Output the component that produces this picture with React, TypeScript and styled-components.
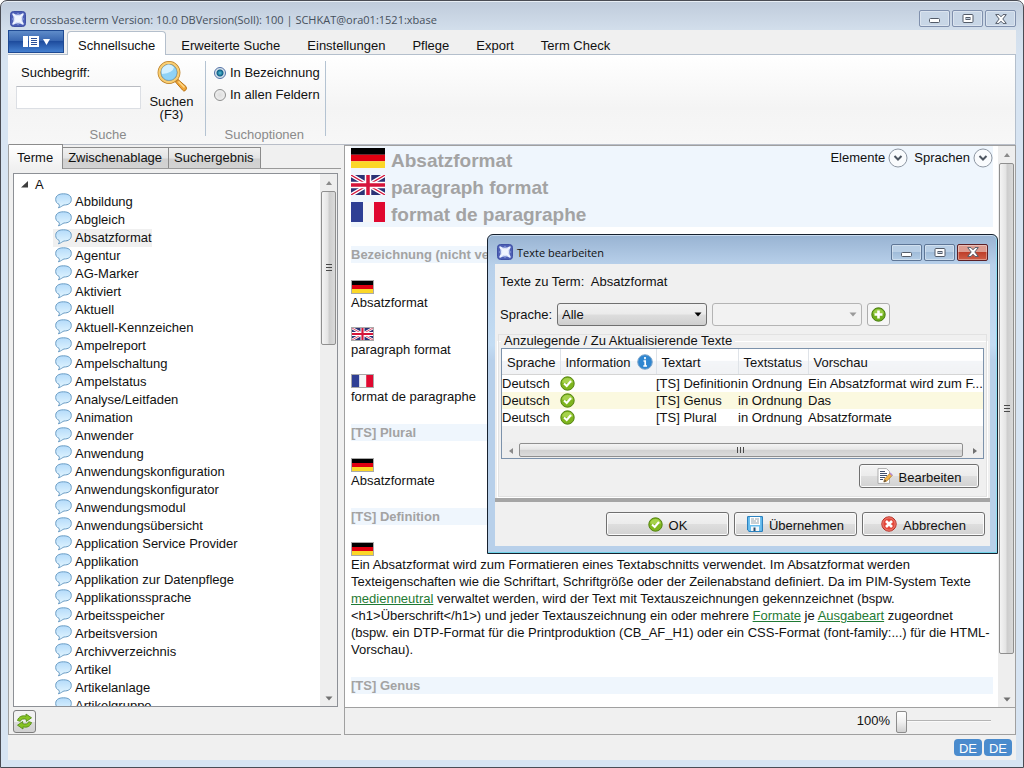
import React from 'react';
import styled, { createGlobalStyle, css } from 'styled-components';

const GlobalStyle = createGlobalStyle`
  *, *::before, *::after { box-sizing: border-box; }
  body {
    margin: 0;
    background: #fff;
    color: #111;
    font: 13px/18px "Liberation Sans", Arial, sans-serif;
  }
  button, input, select { font: inherit; color: inherit; margin: 0; }
  ul { list-style: none; margin: 0; padding: 0; }
  h1, h2, p { margin: 0; }
  svg { display: block; flex: none; }
`;

/* ---------- window frames ---------- */

const Shell = styled.div`
  position: relative;
  display: flex;
  flex-direction: column;
  height: 100vh;
  padding: 0 7px 7px;
  border: 1px solid #4a4c54;
  border-radius: 7px 7px 0 0;
  background: linear-gradient(#bfcbdb 0, #d3dfec 30px, #d7e4f2 60px);
  box-shadow: inset 0 1px 0 #e8eef5;
`;

const TitleBar = styled.header<{ $dialog?: boolean }>`
  display: flex;
  flex: none;
  align-items: center;
  gap: 4px;
  height: 29px;
  padding: ${p => (p.$dialog ? '5px 2px 0 2px' : '6px 0 0 2px')};
`;

const TitleText = styled.h1<{ $active?: boolean }>`
  flex: 1;
  padding-top: 2px;
  font: 11px/18px "Open Sans", "Segoe UI", sans-serif;
  color: ${p => (p.$active ? '#111' : '#46505c')};
  white-space: nowrap;
`;

const WindowButtons = styled.div`
  display: flex;
  gap: 2px;
`;

const WindowButton = styled.button<{ $tone: 'pale' | 'blue' | 'red' }>`
  display: grid;
  place-items: center;
  width: 31px;
  height: 17px;
  padding: 0;
  border: 1px solid #8090ad;
  border-radius: 2px;
  box-shadow: inset 0 0 0 1px rgba(255, 255, 255, 0.35);
  background: #c8d6e6;
  ${p => p.$tone === 'blue' && css`
    border-color: #5e7696;
    background: linear-gradient(#b9cfe6 50%, #a0bcd9 50%, #b4cde6);
  `}
  ${p => p.$tone === 'red' && css`
    border-color: #5c2026;
    background: linear-gradient(#dd9c90 45%, #bf3f2a 50%, #cf5f48);
  `}
`;

const Client = styled.div`
  display: flex;
  flex: 1;
  flex-direction: column;
  min-height: 0;
  background: #f0f0f0;
`;

/* ---------- ribbon ---------- */

const RibbonTabs = styled.nav`
  display: flex;
  flex: none;
  align-items: flex-end;
  height: 25px;
  border-bottom: 1px solid #b4bfcc;
`;

const AppMenuButton = styled.button`
  display: flex;
  align-items: center;
  align-self: flex-start;
  justify-content: center;
  gap: 5px;
  width: 56px;
  height: 23px;
  margin-right: 3px;
  padding: 0;
  border: 1px solid #1f4a93;
  background: linear-gradient(#5f8cc9 0, #3a68b2 45%, #1e4c9e 50%, #4580cf 100%);
`;

const RibbonTab = styled.button<{ $active?: boolean }>`
  height: ${p => (p.$active ? 24 : 23)}px;
  margin-bottom: -1px;
  padding: ${p => (p.$active ? '4px 10px 0' : '5px 0 0')};
  margin-left: ${p => (p.$active ? 0 : 15)}px;
  margin-right: ${p => (p.$active ? 0 : 12)}px;
  border: ${p => (p.$active ? '1px solid #b4bfcc' : 'none')};
  border-bottom: none;
  border-radius: 4px 4px 0 0;
  background: ${p => (p.$active ? '#fff' : 'none')};
  line-height: 18px;
`;

const Ribbon = styled.div`
  display: flex;
  flex: none;
  height: 90px;
  padding: 6px 0 5px 5px;
  border-right: 1px solid #b4bfcc;
  border-bottom: 1px solid #b9bec8;
  background: linear-gradient(#fff 0, #f4f4f4 60%, #f7f7f7 100%);
`;

const RibbonGroup = styled.section`
  display: flex;
  flex-direction: column;
  justify-content: space-between;
  border-right: 1px solid #b4c3d2;
  margin-bottom: 3px;
  padding: 0 5px 0 3px;
`;

const GroupCaption = styled.div`
  color: #8a8a8a;
  text-align: center;
  line-height: 16px;
  margin-bottom: -7px;
`;

const GroupBody = styled.div`
  display: flex;
  gap: 2px;
`;

const SearchField = styled.label`
  display: flex;
  flex-direction: column;
  gap: 4px;
  width: 125px;
  padding-top: 3px;

  span { padding-left: 5px; }
  input {
    width: 100%;
    height: 23px;
    border: 1px solid #dcdfe4;
    border-top-color: #b9bcc2;
    background: #fff;
  }
`;

const SearchButton = styled.button`
  display: flex;
  flex-direction: column;
  align-items: center;
  width: 57px;
  padding: 0;
  border: none;
  background: none;
  line-height: 13px;

  svg { margin-bottom: 2px; }
`;

const RadioList = styled.div`
  display: flex;
  flex-direction: column;
  gap: 4px;
  padding: 3px 0 0 5px;
`;

const RadioLabel = styled.label`
  display: flex;
  align-items: center;
  gap: 4px;

  input {
    appearance: none;
    width: 12px;
    height: 12px;
    border: 1px solid #8e8f8f;
    border-radius: 50%;
    background: radial-gradient(#ddd, #f4f4f4);
  }
  input:checked {
    border-color: #4f6fa5;
    background: radial-gradient(#57c5d8 0, #0f5f86 3px, #d4dfea 4px, #f4f4f4);
  }
`;

/* ---------- workspace ---------- */

const Workspace = styled.main`
  display: flex;
  flex: 1;
  gap: 3px;
  min-height: 0;
`;

const Sidebar = styled.aside`
  display: flex;
  flex: none;
  flex-direction: column;
  width: 333px;
  border: 1px solid #a0a0a0;
  border-width: 0 0 1px 1px;
`;

const PanelTabs = styled.div`
  display: flex;
  flex: none;
  align-items: flex-end;
  height: 24px;
  border-bottom: 1px solid #9a9a9a;
`;

const PanelTab = styled.button<{ $active?: boolean }>`
  height: ${p => (p.$active ? 25 : 21)}px;
  margin-bottom: ${p => (p.$active ? -1 : 0)}px;
  padding: ${p => (p.$active ? '2px 9px 0 8px' : '0 6px 0 5px')};
  border: 1px solid #8b8b8b;
  border-width: 1px 1px 0 0;
  background: ${p => (p.$active ? 'linear-gradient(#fff, #f0f0f0)' : 'linear-gradient(#f0f0f0 0, #e4e4e4 50%, #d0d0d0 55%, #d3d3d3 100%)')};
  line-height: 18px;
`;

const TreeBox = styled.div`
  display: flex;
  flex: 1;
  min-height: 0;
  margin: 4px 3px 0 4px;
  border: 1px solid #8d9096;
  background: #fff;
`;

const Tree = styled.ul`
  flex: 1;
  overflow: hidden;
  padding: 1px 0 0 6px;
`;

const TreeRoot = styled.div`
  display: flex;
  align-items: center;
  gap: 6px;
  height: 18px;

  span { padding-top: 1px; }
`;

const TreeItem = styled.li<{ $selected?: boolean }>`
  display: flex;
  width: max-content;
  height: 18px;
  margin-left: 33px;
  padding-left: 2px;
  gap: 3px;
  background: ${p => (p.$selected ? '#f0f0f0' : 'none')};
`;

const SidebarFooter = styled.div`
  flex: none;
  height: 27px;
  padding: 3px 4px;
`;

const IconButton = styled.button<{ $light?: boolean }>`
  display: grid;
  place-items: center;
  width: 23px;
  height: 23px;
  padding: 0;
  border: 1px solid ${p => (p.$light ? '#adadad' : '#7d7d7d')};
  border-radius: 3px;
  background: ${p => (p.$light ? '#f6f6f6' : 'linear-gradient(#f2f2f2 50%, #dcdcdc 50%, #d0d0d0)')};
`;

/* ---------- scroll bars ---------- */

const ScrollTrack = styled.div<{ $horizontal?: boolean }>`
  display: flex;
  flex: none;
  flex-direction: ${p => (p.$horizontal ? 'row' : 'column')};
  background: #eeeeee;
  ${p => (p.$horizontal ? 'height: 16px;' : 'width: 17px;')}
`;

const ScrollArrow = styled.div`
  display: grid;
  place-items: center;
  flex: none;
  width: 17px;
  height: 17px;
`;

const ScrollThumb = styled.div<{ $horizontal?: boolean; $share: number }>`
  display: grid;
  place-items: center;
  flex: ${p => p.$share} 0 0;
  border: 1px solid #8f8f8f;
  border-radius: 2px;
  margin: ${p => (p.$horizontal ? '1px 0' : '0 1px')};
  background: ${p => (p.$horizontal
    ? 'linear-gradient(#f4f4f4 0, #e6e6e6 45%, #d0d0d0 50%, #dcdcdc 100%)'
    : 'linear-gradient(90deg, #f4f4f4 0, #e4e4e4 45%, #cdcdcd 55%, #dadada 100%)')};
`;

const ScrollRest = styled.div<{ $share: number }>`
  flex: ${p => p.$share} 0 0;
`;

/* ---------- viewer ---------- */

const Viewer = styled.section`
  display: flex;
  flex: 1;
  flex-direction: column;
  min-width: 0;
  border: 1px solid #a0a0a0;
`;

const ViewerScroll = styled.div`
  display: flex;
  flex: 1;
  min-height: 0;
  border-bottom: 1px solid #a0a0a0;
  background: #fff;
`;

const Article = styled.article`
  flex: 1;
  overflow: hidden;
  padding: 0 5px 0 6px;
`;

const Hero = styled.div`
  display: flex;
  justify-content: space-between;
  height: 81px;
  background: #eff6fd;
`;

const HeroTitle = styled.h2`
  display: flex;
  gap: 6px;
  height: 27px;
  padding-top: 2px;
  color: #a3a3a3;
  font-size: 19px;
  font-weight: bold;
  line-height: 26px;
`;

const Filters = styled.div`
  display: flex;
  gap: 6px;
  height: 24px;
`;

const FilterButton = styled.button`
  display: flex;
  align-items: center;
  gap: 3px;
  padding: 0;
  border: none;
  background: none;
`;

const SectionTitle = styled.h2`
  height: 17px;
  margin: 19px 0 17px;
  background: #eff6fd;
  color: #a3a3a3;
  font-size: 13px;
  font-weight: bold;
  line-height: 17px;
`;

const Entry = styled.div`
  display: flex;
  flex-direction: column;
  margin-bottom: 16px;
  line-height: 17px;

  a { color: #1f7a34; }
`;

const ZoomBar = styled.label`
  display: flex;
  flex: none;
  align-items: center;
  justify-content: flex-end;
  gap: 6px;
  height: 26px;
  padding-right: 24px;
`;

const ZoomRange = styled.input`
  appearance: none;
  width: 95px;
  height: 22px;
  background: none;

  &::-webkit-slider-runnable-track {
    height: 2px;
    border-top: 1px solid #b4b4b4;
    border-bottom: 1px solid #fafafa;
  }
  &::-webkit-slider-thumb {
    appearance: none;
    width: 11px;
    height: 22px;
    margin-top: -10px;
    border: 1px solid #8c8c8c;
    border-radius: 2px;
    background: linear-gradient(#fff 0, #f0f0f0 50%, #d0d0d0 100%);
  }
`;

const StatusBar = styled.footer`
  display: flex;
  flex: none;
  align-items: flex-start;
  justify-content: flex-end;
  gap: 2px;
  height: 25px;
  padding: 4px 4px 0;
`;

const Badge = styled.span`
  width: 28px;
  height: 17px;
  border-radius: 4px;
  background: #4a8bcd;
  color: #fff;
  text-align: center;
  line-height: 19px;
`;

/* ---------- dialog ---------- */

const Dialog = styled.div`
  position: absolute;
  top: 233px;
  right: 25px;
  display: flex;
  flex-direction: column;
  width: 511px;
  padding: 0 7px 7px;
  border: 1px solid #16202e;
  border-radius: 6px 6px 0 0;
  background: linear-gradient(#98b3d2 0, #b8d0ea 30px, #c3dcf3 110px, #b8d0ea 125px);
  box-shadow: inset 0 1px 0 #c9dbee, inset 0 -1px 0 #6fd3e8, inset -1px 0 0 #8fdcef;
`;

const DialogBody = styled.div`
  display: flex;
  flex-direction: column;
  height: 282px;
  background: #f0f0f0;
`;

const TermLine = styled.p`
  padding: 9px 5px 0;
  white-space: pre;
`;

const FormRow = styled.div`
  display: flex;
  align-items: center;
  gap: 5px;
  padding: 12px 5px 0;
`;

const SelectBox = styled.label<{ $disabled?: boolean }>`
  position: relative;
  display: flex;
  align-items: center;
  gap: 5px;
  color: #111;

  select {
    appearance: none;
    width: 150px;
    height: 23px;
    padding: 0 4px;
    border: 1px solid ${p => (p.$disabled ? '#b4b4b4' : '#707070')};
    border-radius: 3px;
    background: ${p => (p.$disabled ? '#f2f2f2' : 'linear-gradient(#f2f2f2 0, #ebebeb 48%, #dddddd 52%, #cfcfcf 100%)')};
    opacity: 1;
  }
  svg { position: absolute; right: 5px; top: 7px; }
`;

const TextGroup = styled.fieldset`
  display: flex;
  flex: 1;
  flex-direction: column;
  align-items: flex-end;
  gap: 5px;
  min-width: 0;
  margin: 7px 2px 0;
  padding: 0 3px 7px 3px;
  border: 1px solid #fff;
  outline: 1px solid #e2e2e2;
  outline-offset: -2px;

  legend {
    padding: 0 3px;
    line-height: 16px;
    background: #f0f0f0;
  }
`;

const TableFrame = styled.div`
  display: flex;
  flex-direction: column;
  justify-content: space-between;
  width: 100%;
  height: 111px;
  margin-top: -1px;
  border: 1px solid #7c92ab;
`;

const Table = styled.table`
  width: 100%;
  table-layout: fixed;
  border-collapse: collapse;
  line-height: 17px;

  th {
    height: 25px;
    padding: 2px 0 0 5px;
    border-right: 1px solid #dfe3e8;
    border-bottom: 1px solid #d5d5d5;
    background: linear-gradient(#fff 45%, #f3f5f8 50%, #f1f2f4 100%);
    font-weight: normal;
    text-align: left;
    white-space: nowrap;
  }
  th:last-child { border-right: none; }
  td {
    height: 17px;
    padding: 0;
    white-space: nowrap;
  }
  tbody tr { background: #fff; }
  tbody tr:nth-child(2) { background: #fbf9e0; }
`;

const InfoHead = styled.span`
  display: flex;
  gap: 6px;
`;

const Separator = styled.hr`
  flex: none;
  width: 100%;
  height: 4px;
  margin: 0;
  border: none;
  background: #a5a5a5;
`;

const ButtonRow = styled.div`
  display: flex;
  flex: none;
  justify-content: flex-end;
  gap: 5px;
  padding: 10px 5px 10px;
`;

const PushButton = styled.button`
  display: flex;
  align-items: center;
  justify-content: center;
  gap: 6px;
  width: 123px;
  height: 24px;
  padding: 0;
  border: 1px solid #707070;
  border-radius: 3px;
  background: linear-gradient(#f3f3f3 0, #ececec 48%, #dedede 52%, #d2d2d2 100%);
  box-shadow: inset 0 0 0 1px #fbfbfb;

  span { padding-top: 3px; }
`;

const EditButton = styled(PushButton)`
  width: 120px;
  margin-right: 5px;
`;

/* ---------- icons ---------- */

const LogoIcon = () => (
  <svg width="16" height="16" viewBox="0 0 16 16">
    <rect x=".5" y=".5" width="15" height="15" rx="3" fill="#4d5fb5" stroke="#3f50a4" />
    <path d="M2 2Q8 5 14 2Q11 8 14 14Q8 11 2 14Q5 8 2 2z" fill="#b9c6ee" />
    <path d="M3 3L13 13M13 3L3 13" stroke="#eef3ff" strokeWidth="2" />
    <circle cx="8" cy="8" r="3.800" fill="#f2f6ff" opacity=".9" />
    <g fill="#8d9edb">
      <circle cx="8" cy="2.500" r=".7" /><circle cx="8" cy="13.500" r=".7" />
      <circle cx="2.500" cy="8" r=".7" /><circle cx="13.500" cy="8" r=".7" />
    </g>
  </svg>
);

const MinimizeIcon = () => (
  <svg width="12" height="9" viewBox="0 0 12 9"><rect x=".5" y="4.500" width="10" height="4" rx="1" fill="#fff" stroke="#535b68" /></svg>
);
const RestoreIcon = () => (
  <svg width="12" height="9" viewBox="0 0 12 9">
    <rect x="1" y=".5" width="10" height="8" rx="1" fill="#fff" stroke="#535b68" />
    <rect x="4" y="3.500" width="4" height="2" fill="#c0cddd" stroke="#535b68" />
  </svg>
);
const CloseIcon = () => (
  <svg width="12" height="10" viewBox="0 0 12 10">
    <path d="M.7.6H4L6 2.800L8 .6H11.300L7.800 5L11.300 9.400H8L6 7.200L4 9.400H.7L4.200 5z" fill="#fff" stroke="#535b68" strokeLinejoin="round" />
  </svg>
);

const MenuIcon = () => (
  <svg width="27" height="13" viewBox="0 0 27 13">
    <path d="M0 1H5V12H0z" fill="#fff" />
    <path d="M6 1H16V12H6z" fill="#fff" />
    <path d="M8 3.500H14M8 5.500H14M8 7.500H14M8 9.500H14" stroke="#2a5099" />
    <path d="M20 4H27L23.500 10z" fill="#fff" />
  </svg>
);

const MagnifierIcon = () => (
  <svg width="32" height="32" viewBox="0 0 32 32">
    <path d="M19.500 21L22 18.500L30 25.500Q31.500 28 29 29.800Q27.500 30.500 26.500 29z" fill="#f0a638" stroke="#b97416" />
    <path d="M22.500 20.500L28.500 26.500" stroke="#ffd98a" strokeWidth="1.500" />
    <circle cx="13" cy="11.500" r="9.600" fill="#a5dcf8" stroke="#b97a1c" strokeWidth="3.600" />
    <circle cx="13" cy="11.500" r="9.600" fill="none" stroke="#f8ce74" strokeWidth="2.200" />
    <circle cx="13" cy="11.500" r="8" fill="#8fd2f6" stroke="#6c9fbe" strokeWidth=".7" />
    <path d="M6 13A7 7 0 0 1 18 6.300Q17 12 6 13z" fill="#d3f0ff" />
  </svg>
);

const BubbleIcon = () => (
  <svg width="17" height="16" viewBox="0 0 17 16">
    <defs>
      <linearGradient id="bubble" x1="0" y1="0" x2="0" y2="1">
        <stop offset="0" stopColor="#b4dbfa" />
        <stop offset="1" stopColor="#e4f6ff" />
      </linearGradient>
    </defs>
    <path d="M8.500 .8C13.500 .8 16.300 2.800 16.300 6.400C16.300 10.200 13.500 12 9 12C7.500 12.400 6.400 14 3.300 14.800C4.500 13.600 4.600 12.500 4 11.300C1.800 10.400 .7 8.800 .7 6.400C.7 2.800 3.500 .8 8.500 .8z" fill="url(#bubble)" stroke="#6c9dc4" />
  </svg>
);

const GermanFlag = ({ w, h }: { w: number; h: number }) => (
  <svg width={w} height={h} viewBox="0 0 34 21" preserveAspectRatio="none">
    <path d="M0 0H34V7H0z" fill="#000" /><path d="M0 7H34V14H0z" fill="#e00010" /><path d="M0 14H34V21H0z" fill="#fbd728" />
  </svg>
);
const BritishFlag = ({ w, h }: { w: number; h: number }) => (
  <svg width={w} height={h} viewBox="0 0 34 20" preserveAspectRatio="none">
    <path d="M0 0H34V20H0z" fill="#2b3276" />
    <path d="M0 0L34 20M34 0L0 20" stroke="#fff" strokeWidth="4" />
    <path d="M0 0L34 20M34 0L0 20" stroke="#d5143a" strokeWidth="1.200" />
    <path d="M17 0V20M0 10H34" stroke="#fff" strokeWidth="6.500" />
    <path d="M17 0V20M0 10H34" stroke="#d5143a" strokeWidth="3.500" />
  </svg>
);
const FrenchFlag = ({ w, h }: { w: number; h: number }) => (
  <svg width={w} height={h} viewBox="0 0 34 20" preserveAspectRatio="none">
    <path d="M0 0H12V20H0z" fill="#2f3f94" /><path d="M12 0H23V20H12z" fill="#f6f6f6" /><path d="M23 0H34V20H23z" fill="#e0082f" />
  </svg>
);

const SmallFlagFrame = styled.span`
  display: block;
  width: 23px;
  height: 14px;
  border: 1px solid #a9a9a9;
`;

const RoundChevron = () => (
  <svg width="20" height="20" viewBox="0 0 20 20">
    <circle cx="10" cy="10" r="9" fill="#f9fbfd" stroke="#8e97a3" />
    <path d="M6.500 8L10 11.500L13.500 8" fill="none" stroke="#4d5560" strokeWidth="2" />
  </svg>
);

const CheckIcon = () => (
  <svg width="15" height="15" viewBox="0 0 15 15">
    <circle cx="7.500" cy="7.500" r="6.700" fill="#7fb51f" stroke="#538310" />
    <path d="M2 6.500A5.600 5.600 0 0 1 13 6.500Q7.500 8 2 6.500z" fill="#a6d24c" />
    <path d="M4 7.500L6.700 10L11 5" fill="none" stroke="#fff" strokeWidth="2.100" />
  </svg>
);
const PlusIcon = () => (
  <svg width="15" height="15" viewBox="0 0 15 15">
    <circle cx="7.500" cy="7.500" r="6.700" fill="#6fae1c" stroke="#477a10" />
    <path d="M2 6.500A5.600 5.600 0 0 1 13 6.500Q7.500 8 2 6.500z" fill="#98cb45" />
    <path d="M7.500 3.500V11.500M3.500 7.500H11.500" stroke="#fff" strokeWidth="2.600" />
  </svg>
);
const CancelIcon = () => (
  <svg width="16" height="16" viewBox="0 0 16 16">
    <circle cx="8" cy="8" r="7.200" fill="#e2473a" stroke="#b42e24" />
    <circle cx="8" cy="8" r="6.200" fill="none" stroke="#f09086" strokeWidth=".8" />
    <path d="M5 5L11 11M11 5L5 11" stroke="#fff" strokeWidth="2.600" />
  </svg>
);
const InfoIcon = () => (
  <svg width="16" height="16" viewBox="0 0 16 16">
    <circle cx="8" cy="8" r="7.300" fill="#2f86d0" stroke="#84a9cc" />
    <path d="M8 3V5.200M6.500 7H8.200V12M6.300 12H10" stroke="#fff" strokeWidth="1.700" fill="none" />
  </svg>
);
const SaveIcon = () => (
  <svg width="16" height="16" viewBox="0 0 16 16">
    <path d="M.6.6H15.400V15.400H2L.6 14z" fill="#6cc0f0" stroke="#1e78ba" />
    <path d="M3 1H13V9H3z" fill="#fff" />
    <path d="M4 3H7M8 3H12M4 5H9M10 5H12M4 7H12" stroke="#7a8a98" strokeWidth=".8" />
    <path d="M4 10.500H12V15H4z" fill="#f2f6fa" /><path d="M6.500 11.500H8.500V15H6.500z" fill="#2e4d68" />
  </svg>
);
const EditIcon = () => (
  <svg width="16" height="16" viewBox="0 0 16 16">
    <path d="M1 .6H9.500L12.500 3.600V15.400H1z" fill="#fff" stroke="#9a9a9a" strokeWidth=".8" />
    <path d="M3 3.500H8M3 5.500H10M3 7.500H10M3 9.500H8M3 11.500H6" stroke="#41506b" />
    <path d="M7.500 11L13 5.300L15.200 7.500L9.600 13.200L6.800 14z" fill="#f3b548" stroke="#a56d1d" strokeWidth=".7" />
    <path d="M12.500 5.600L13.500 4.600L15.700 6.800L14.700 7.900z" fill="#b48ad0" />
    <path d="M6.800 14L8 11.500L9.200 12.900z" fill="#444" />
  </svg>
);
const RefreshIcon = () => (
  <svg width="17" height="17" viewBox="0 0 17 17">
    <path d="M1.500 7.500C2.500 3.500 6.500 2 10 3.200V1L15.500 4.800L10.300 8.500V6.300C7.500 5.500 5 6 4.300 8.300z" fill="#86c423" stroke="#568c16" strokeWidth=".9" strokeLinejoin="round" />
    <path d="M15.500 9.500C14.500 13.500 10.500 15 7 13.800V16L1.500 12.200L6.700 8.500V10.700C9.500 11.500 12 11 12.700 8.700z" fill="#86c423" stroke="#568c16" strokeWidth=".9" strokeLinejoin="round" />
  </svg>
);
const ExpandedIcon = () => (
  <svg width="9" height="9" viewBox="0 0 9 9"><path d="M8 1V7.500H1z" fill="#3d3d3d" /></svg>
);
const Triangle = ({ dir, color = '#707070' }: { dir: 'up' | 'down' | 'left' | 'right'; color?: string }) => {
  const d = { up: 'M1 6L4 2L7 6z', down: 'M.5 2.500H7.500L4 6.500z', left: 'M6 1L2 4L6 7z', right: 'M2 1L6 4L2 7z' }[dir];
  return <svg width="8" height="8" viewBox="0 0 8 8"><path d={d} fill={color} /></svg>;
};
const Grip = ({ horizontal }: { horizontal?: boolean }) => (
  <svg width="8" height="8" viewBox="0 0 8 8">
    <path d={horizontal ? 'M.5 1V7M3.500 1V7M6.500 1V7' : 'M1 .5H7M1 3.500H7M1 6.500H7'} stroke="#4a4a4a" />
  </svg>
);

/* ---------- composed parts ---------- */

const ScrollBar = ({ thumb, rest, horizontal }: { thumb: number; rest: number; horizontal?: boolean }) => (
  <ScrollTrack $horizontal={horizontal} aria-hidden="true">
    <ScrollArrow><Triangle dir={horizontal ? 'left' : 'up'} color="#8a8a8a" /></ScrollArrow>
    <ScrollThumb $horizontal={horizontal} $share={thumb}><Grip horizontal={horizontal} /></ScrollThumb>
    <ScrollRest $share={rest} />
    <ScrollArrow><Triangle dir={horizontal ? 'right' : 'down'} /></ScrollArrow>
  </ScrollTrack>
);

const Controls = ({ active }: { active?: boolean }) => (
  <WindowButtons>
    <WindowButton $tone={active ? 'blue' : 'pale'} aria-label="Minimieren"><MinimizeIcon /></WindowButton>
    <WindowButton $tone={active ? 'blue' : 'pale'} aria-label="Maximieren"><RestoreIcon /></WindowButton>
    <WindowButton $tone={active ? 'red' : 'pale'} aria-label="Schließen"><CloseIcon /></WindowButton>
  </WindowButtons>
);

const flags = { de: GermanFlag, en: BritishFlag, fr: FrenchFlag };

const SmallFlag = ({ lang }: { lang: keyof typeof flags }) => {
  const Flag = flags[lang];
  return <SmallFlagFrame><Flag w={21} h={12} /></SmallFlagFrame>;
};

const ribbonTabs = ['Erweiterte Suche', 'Einstellungen', 'Pflege', 'Export', 'Term Check'];

const terms = [
  'Abbildung', 'Abgleich', 'Absatzformat', 'Agentur', 'AG-Marker', 'Aktiviert', 'Aktuell', 'Aktuell-Kennzeichen',
  'Ampelreport', 'Ampelschaltung', 'Ampelstatus', 'Analyse/Leitfaden', 'Animation', 'Anwender', 'Anwendung',
  'Anwendungskonfiguration', 'Anwendungskonfigurator', 'Anwendungsmodul', 'Anwendungsübersicht',
  'Application Service Provider', 'Applikation', 'Applikation zur Datenpflege', 'Applikationssprache',
  'Arbeitsspeicher', 'Arbeitsversion', 'Archivverzeichnis', 'Artikel', 'Artikelanlage', 'Artikelgruppe',
];

const names: { lang: keyof typeof flags; text: string }[] = [
  { lang: 'de', text: 'Absatzformat' },
  { lang: 'en', text: 'paragraph format' },
  { lang: 'fr', text: 'format de paragraphe' },
];

const texts = [
  ['[TS] Definition', 'Ein Absatzformat wird zum F...'],
  ['[TS] Genus', 'Das'],
  ['[TS] Plural', 'Absatzformate'],
];

const TextDialog = () => (
  <Dialog role="dialog" aria-label="Texte bearbeiten">
    <TitleBar $dialog>
      <LogoIcon />
      <TitleText as="h2" $active>Texte bearbeiten</TitleText>
      <Controls active />
    </TitleBar>
    <DialogBody>
      <TermLine>{'Texte zu Term:  Absatzformat'}</TermLine>
      <FormRow>
        <SelectBox>
          Sprache:
          <select defaultValue="Alle"><option>Alle</option></select>
          <Triangle dir="down" color="#000" />
        </SelectBox>
        <SelectBox $disabled>
          <select disabled aria-label="Textart" />
          <Triangle dir="down" color="#9a9a9a" />
        </SelectBox>
        <IconButton $light aria-label="Hinzufügen"><PlusIcon /></IconButton>
      </FormRow>
      <TextGroup>
        <legend>Anzulegende / Zu Aktualisierende Texte</legend>
        <TableFrame>
          <Table>
            <colgroup>
              <col width="58" /><col width="96" /><col width="82" /><col width="70" /><col />
            </colgroup>
            <thead>
              <tr>
                <th>Sprache</th>
                <th><InfoHead>Information <InfoIcon /></InfoHead></th>
                <th>Textart</th>
                <th>Textstatus</th>
                <th>Vorschau</th>
              </tr>
            </thead>
            <tbody>
              {texts.map(([kind, preview]) => (
                <tr key={kind}>
                  <td>Deutsch</td>
                  <td><CheckIcon /></td>
                  <td>{kind}</td>
                  <td>in Ordnung</td>
                  <td>{preview}</td>
                </tr>
              ))}
            </tbody>
          </Table>
          <ScrollBar horizontal thumb={445} rest={3} />
        </TableFrame>
        <EditButton><EditIcon /><span>Bearbeiten</span></EditButton>
      </TextGroup>
      <Separator />
      <ButtonRow>
        <PushButton><CheckIcon /><span>OK</span></PushButton>
        <PushButton><SaveIcon /><span>Übernehmen</span></PushButton>
        <PushButton><CancelIcon /><span>Abbrechen</span></PushButton>
      </ButtonRow>
    </DialogBody>
  </Dialog>
);

export default function App() {
  return (
    <>
      <GlobalStyle />
      <Shell>
        <TitleBar>
          <LogoIcon />
          <TitleText>crossbase.term Version: 10.0 DBVersion(Soll): 100 | SCHKAT@ora01:1521:xbase</TitleText>
          <Controls />
        </TitleBar>
        <Client>
          <RibbonTabs>
            <AppMenuButton aria-label="Menü"><MenuIcon /></AppMenuButton>
            <RibbonTab $active>Schnellsuche</RibbonTab>
            {ribbonTabs.map(t => <RibbonTab key={t}>{t}</RibbonTab>)}
          </RibbonTabs>
          <Ribbon>
            <RibbonGroup>
              <GroupBody>
                <SearchField><span>Suchbegriff:</span><input type="text" /></SearchField>
                <SearchButton><MagnifierIcon />Suchen<br />(F3)</SearchButton>
              </GroupBody>
              <GroupCaption>Suche</GroupCaption>
            </RibbonGroup>
            <RibbonGroup>
              <RadioList>
                <RadioLabel><input type="radio" name="scope" defaultChecked />In Bezeichnung</RadioLabel>
                <RadioLabel><input type="radio" name="scope" />In allen Feldern</RadioLabel>
              </RadioList>
              <GroupCaption>Suchoptionen</GroupCaption>
            </RibbonGroup>
          </Ribbon>
          <Workspace>
            <Sidebar>
              <PanelTabs>
                <PanelTab $active>Terme</PanelTab>
                <PanelTab>Zwischenablage</PanelTab>
                <PanelTab>Suchergebnis</PanelTab>
              </PanelTabs>
              <TreeBox>
                <Tree>
                  <li>
                    <TreeRoot><ExpandedIcon /><span>A</span></TreeRoot>
                    <ul>
                      {terms.map(t => (
                        <TreeItem key={t} $selected={t === 'Absatzformat'}><BubbleIcon />{t}</TreeItem>
                      ))}
                    </ul>
                  </li>
                </Tree>
                <ScrollBar thumb={153} rest={347} />
              </TreeBox>
              <SidebarFooter>
                <IconButton aria-label="Aktualisieren"><RefreshIcon /></IconButton>
              </SidebarFooter>
            </Sidebar>
            <Viewer>
              <ViewerScroll>
                <Article>
                  <Hero>
                    <div>
                      {names.map(({ lang, text }) => {
                        const Flag = flags[lang];
                        return <HeroTitle key={lang}><Flag w={34} h={20} />{text}</HeroTitle>;
                      })}
                    </div>
                    <Filters>
                      <FilterButton>Elemente<RoundChevron /></FilterButton>
                      <FilterButton>Sprachen<RoundChevron /></FilterButton>
                    </Filters>
                  </Hero>
                  <SectionTitle>Bezeichnung (nicht verwenden)</SectionTitle>
                  {names.map(({ lang, text }) => (
                    <Entry key={lang}><SmallFlag lang={lang} /><p>{text}</p></Entry>
                  ))}
                  <SectionTitle>[TS] Plural</SectionTitle>
                  <Entry><SmallFlag lang="de" /><p>Absatzformate</p></Entry>
                  <SectionTitle>[TS] Definition</SectionTitle>
                  <Entry>
                    <SmallFlag lang="de" />
                    <p>
                      Ein Absatzformat wird zum Formatieren eines Textabschnitts verwendet. Im Absatzformat werden
                      Texteigenschaften wie die Schriftart, Schriftgröße oder der Zeilenabstand definiert. Da im PIM-System
                      Texte <a href="#medienneutral">medienneutral</a> verwaltet werden, wird der Text mit Textauszeichnungen
                      gekennzeichnet (bspw. {'<h1>Überschrift</h1>'}) und jeder Textauszeichnung ein oder mehrere{' '}
                      <a href="#formate">Formate</a> je <a href="#ausgabeart">Ausgabeart</a> zugeordnet (bspw. ein DTP-Format
                      für die Printproduktion (CB_AF_H1) oder ein CSS-Format (font-family:...) für die HTML-Vorschau).
                    </p>
                  </Entry>
                  <SectionTitle>[TS] Genus</SectionTitle>
                </Article>
                <ScrollBar thumb={492} rest={36} />
              </ViewerScroll>
              <ZoomBar>
                100%
                <ZoomRange type="range" defaultValue={0} />
              </ZoomBar>
            </Viewer>
          </Workspace>
          <StatusBar>
            <Badge>DE</Badge>
            <Badge>DE</Badge>
          </StatusBar>
        </Client>
        <TextDialog />
      </Shell>
    </>
  );
}
